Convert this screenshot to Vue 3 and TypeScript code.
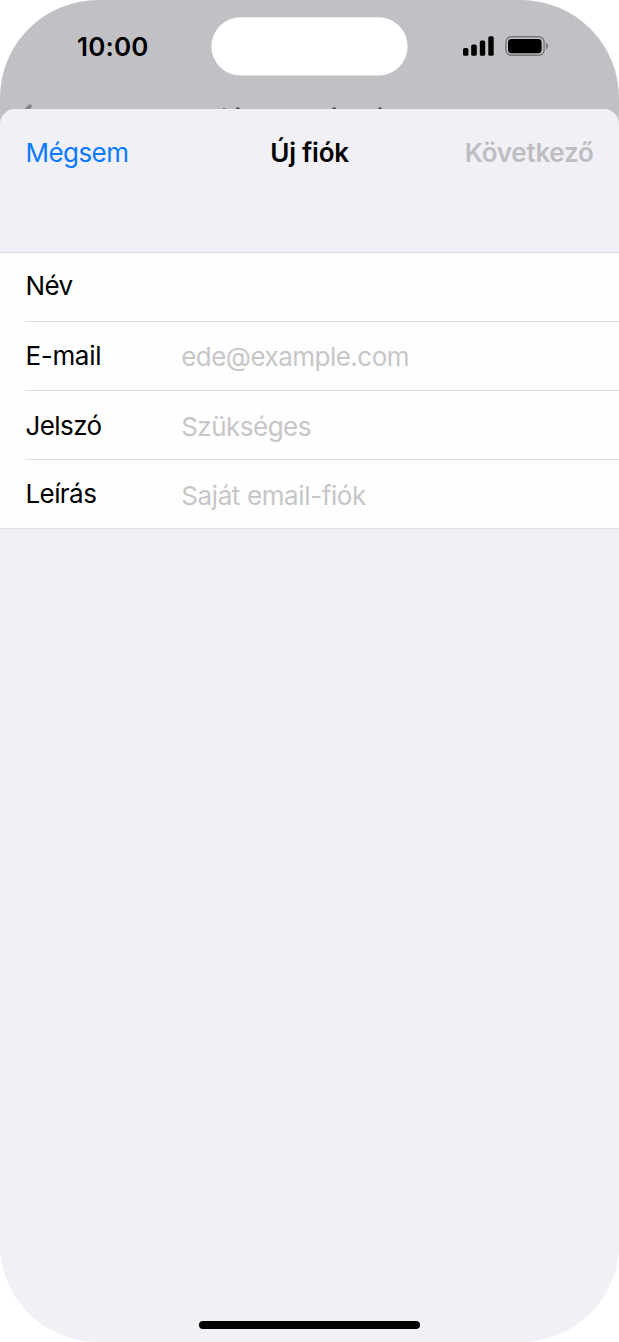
<script setup lang="ts">
interface Field {
  id: string
  label: string
  hint: string
}

const fields: Field[] = [
  { id: 'name', label: 'Név', hint: '' },
  { id: 'email', label: 'E-mail', hint: 'ede@example.com' },
  { id: 'password', label: 'Jelszó', hint: 'Szükséges' },
  { id: 'description', label: 'Leírás', hint: 'Saját email-fiók' },
]
</script>

<template>
  <div class="phone">
    <header class="status">
      <span class="time">10:00</span>
      <svg class="island" width="197" height="60" viewBox="0 0 197 60" aria-hidden="true">
        <rect x="0.4" y="1.2" width="196.2" height="58.2" rx="29.1" fill="#fff" />
      </svg>
      <svg class="indicators" width="88" height="24" viewBox="0 0 88 24" aria-hidden="true">
        <rect x="1" y="14" width="5.4" height="7.8" rx="1.6" />
        <rect x="9.2" y="10.6" width="5.6" height="11.2" rx="1.6" />
        <rect x="17.8" y="6.4" width="5.4" height="15.4" rx="1.6" />
        <rect x="26.3" y="2.2" width="5.4" height="19.6" rx="1.6" />
        <rect x="43.9" y="2.7" width="38.2" height="18.6" rx="5.4" fill="none" stroke="#76767a" stroke-width="1.4" />
        <rect x="46" y="5" width="33.6" height="14.2" rx="3.4" />
        <path d="M84 8.6 C86.6 9.8 86.6 14.4 84 15.6 Z" fill="#76767a" />
      </svg>
    </header>
    <div class="behind">
      <svg class="peek" width="619" height="34" viewBox="0 0 619 34" aria-hidden="true">
        <path d="M30 30.2 L19 41.2" fill="none" stroke="#85858a" stroke-width="3.8" stroke-linecap="round" />
        <g fill="#4a4a4e">
          <rect x="222.8" y="32.2" width="2.6" height="1.8" opacity="0.8" />
          <path d="M235.6 34 L236.4 31.4 H239.6 L239 34 Z" />
          <path d="M331.8 34 L332.8 31.4 H336 L335.2 34 Z" />
          <path d="M377.6 34 L378.6 31.4 H381.6 L381 34 Z" />
        </g>
      </svg>
    </div>
    <main class="sheet">
      <nav class="bar">
        <span class="cancel">Mégsem</span>
        <span class="title">Új fiók</span>
        <span class="next">Következő</span>
      </nav>
      <div class="form">
        <div v-for="field in fields" :key="field.id" class="row" :class="field.id">
          <span class="label">{{ field.label }}</span>
          <span class="hint">{{ field.hint }}</span>
        </div>
      </div>
      <div class="home"></div>
    </main>
  </div>
</template>

<style>
body {
  background: #fff;
}
</style>

<style scoped>
.phone {
  display: flex;
  flex-direction: column;
  width: 618.6px;
  height: 1342px;
  overflow: hidden;
  border-radius: 98px;
  background: linear-gradient(#c1c0c5 0 140px, #f1f0f6 140px);
  font-family: Inter, "Liberation Sans", sans-serif;
  font-size: 26px;
  line-height: 32px;
  letter-spacing: -0.56px;
  color: #000;
  white-space: nowrap;
}
.status {
  display: grid;
  grid-template-columns: 211px 197px 1fr;
  align-items: center;
  height: 60px;
  padding-top: 16px;
}
.time {
  padding: 2px 0 0 77px;
  font-weight: 600;
  letter-spacing: 0.15px;
}
.island {
  display: block;
}
.indicators {
  margin-left: 54px;
}
.behind {
  height: 32.8px;
  overflow: hidden;
}
.peek {
  display: block;
}
.sheet {
  display: flex;
  flex: 1;
  flex-direction: column;
  border-radius: 15px 15px 0 0;
  background: #f1f0f6;
}
.bar {
  display: grid;
  grid-template-columns: 1fr auto 1fr;
  height: 115.2px;
  padding: 28.3px 25px 0 25.5px;
}
.cancel {
  color: #0a7aff;
}
.title {
  font-weight: 600;
  letter-spacing: -0.25px;
}
.next {
  justify-self: end;
  font-weight: 600;
  letter-spacing: -0.25px;
  color: #bebec0;
}
.form {
  border-top: 1px solid #dcdce0;
  border-bottom: 1px solid #dfdfe4;
  background: #fefefe;
}
.row {
  display: grid;
  grid-template-columns: 155.8px 1fr;
  height: 68px;
  margin-left: 25px;
  padding-left: 0.4px;
  border-bottom: 1px solid #dddddf;
}
.row:last-child {
  border-bottom: 0;
}
.label {
  padding-top: 17px;
}
.email .label {
  padding-top: 17.5px;
  letter-spacing: -0.3px;
}
.password .label {
  padding-top: 19px;
}
.description .label {
  padding-top: 18px;
}
.hint {
  padding-top: 19px;
  letter-spacing: -0.52px;
  color: #c6c6c8;
}
.password .hint,
.description .hint {
  padding-top: 20px;
}
.description .hint {
  letter-spacing: -0.38px;
}
.home {
  width: 221px;
  height: 8px;
  margin: auto auto 12.6px;
  border-radius: 4px;
  background: #000;
}
</style>
